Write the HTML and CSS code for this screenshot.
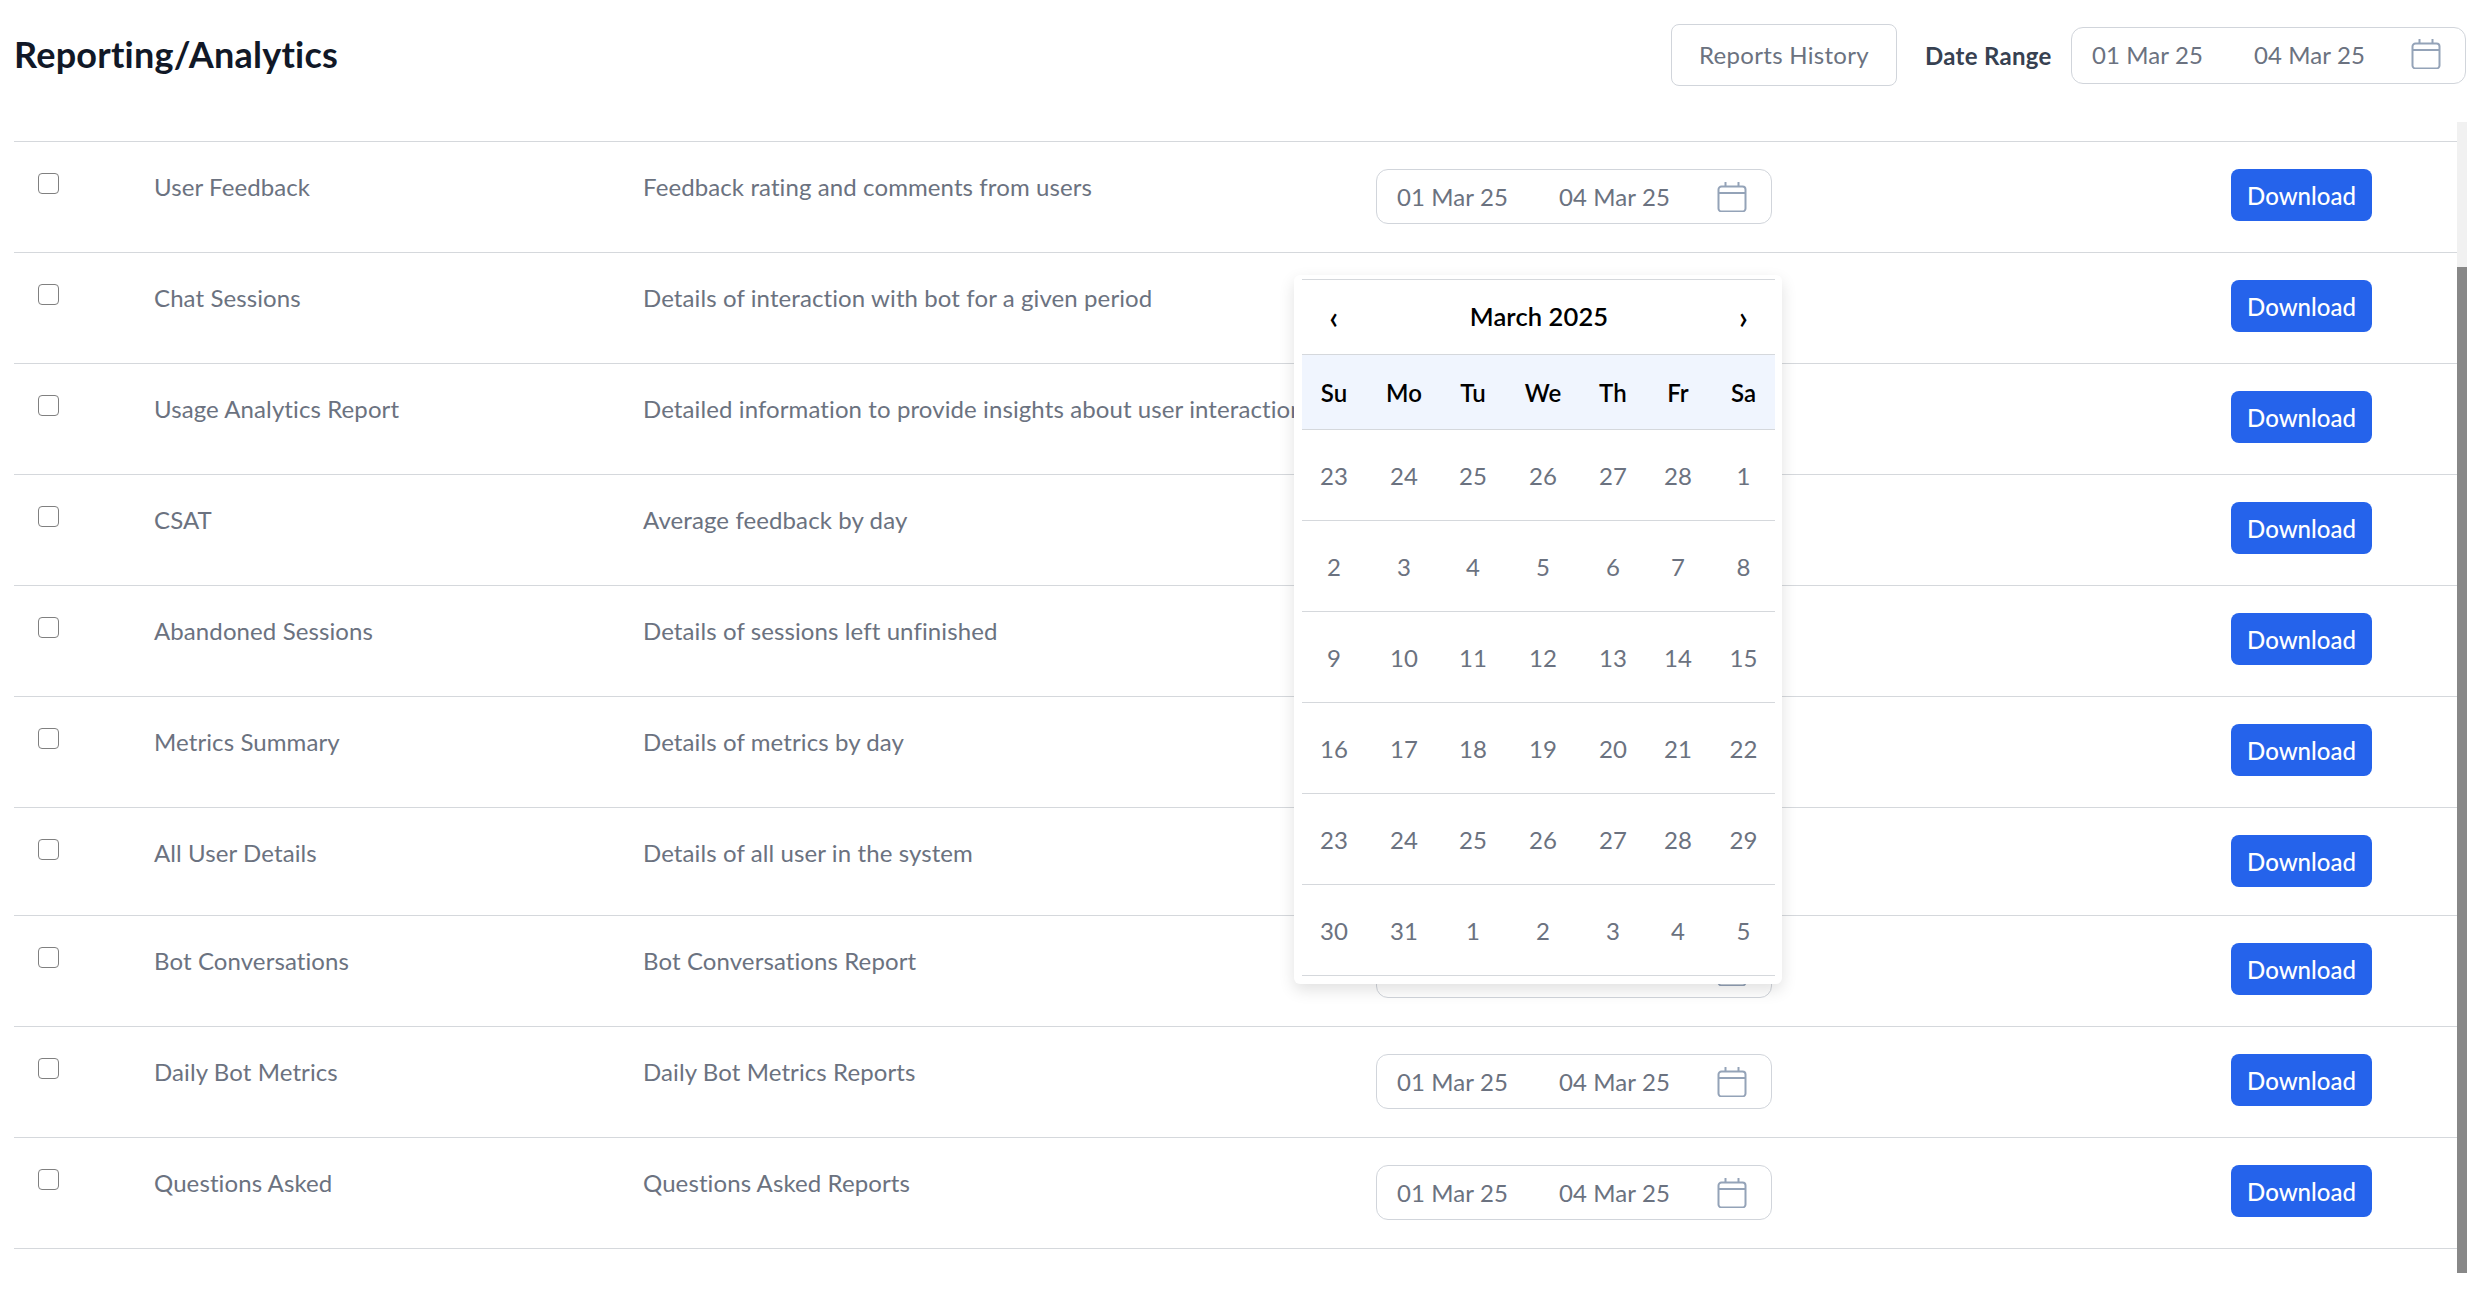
FILE: index.html
```html
<!DOCTYPE html>
<html lang="en">
<head>
<meta charset="utf-8">
<title>Reporting/Analytics</title>
<link rel="stylesheet" href="styles.css">
</head>
<body>
<svg class="defs" width="0" height="0" aria-hidden="true">
  <symbol id="cal" viewBox="0 0 30 30">
    <path d="M4.5 4.500h21a3 3 0 0 1 3 3v19a3 3 0 0 1-3 3h-21a3 3 0 0 1-3-3v-19a3 3 0 0 1 3-3zM1.500 11h27M8.500 .5v4M21.500 .5v4" fill="none" stroke="currentColor" stroke-width="2" stroke-linecap="round"/>
  </symbol>
</svg>
<header class="top">
  <h1 class="title">Reporting/Analytics</h1>
  <div class="top-actions">
    <button class="history">Reports History</button>
    <span class="range-label">Date Range</span>
    <div class="date-box date-box-top"><span class="date">01 Mar 25</span><span class="date">04 Mar 25</span><svg class="cal-icon"><use href="#cal"/></svg></div>
  </div>
</header>
<div class="body-wrap">
  <main class="reports">
    <div class="row"><input class="check" type="checkbox"><span class="name">User Feedback</span><span class="desc">Feedback rating and comments from users</span><div class="date-box"><span class="date">01 Mar 25</span><span class="date">04 Mar 25</span><svg class="cal-icon"><use href="#cal"/></svg></div><button class="download">Download</button></div>
    <div class="row row-covered"><input class="check" type="checkbox"><span class="name">Chat Sessions</span><span class="desc">Details of interaction with bot for a given period</span><div class="date-box"><span class="date">01 Mar 25</span><span class="date">04 Mar 25</span><svg class="cal-icon"><use href="#cal"/></svg></div><button class="download">Download</button></div>
    <div class="row row-covered"><input class="check" type="checkbox"><span class="name">Usage Analytics Report</span><span class="desc">Detailed information to provide insights about user interactions</span><div class="date-box"><span class="date">01 Mar 25</span><span class="date">04 Mar 25</span><svg class="cal-icon"><use href="#cal"/></svg></div><button class="download">Download</button></div>
    <div class="row row-covered"><input class="check" type="checkbox"><span class="name">CSAT</span><span class="desc">Average feedback by day</span><div class="date-box"><span class="date">01 Mar 25</span><span class="date">04 Mar 25</span><svg class="cal-icon"><use href="#cal"/></svg></div><button class="download">Download</button></div>
    <div class="row row-covered"><input class="check" type="checkbox"><span class="name">Abandoned Sessions</span><span class="desc">Details of sessions left unfinished</span><div class="date-box"><span class="date">01 Mar 25</span><span class="date">04 Mar 25</span><svg class="cal-icon"><use href="#cal"/></svg></div><button class="download">Download</button></div>
    <div class="row row-covered"><input class="check" type="checkbox"><span class="name">Metrics Summary</span><span class="desc">Details of metrics by day</span><div class="date-box"><span class="date">01 Mar 25</span><span class="date">04 Mar 25</span><svg class="cal-icon"><use href="#cal"/></svg></div><button class="download">Download</button></div>
    <div class="row row-short row-covered"><input class="check" type="checkbox"><span class="name">All User Details</span><span class="desc">Details of all user in the system</span><div class="date-box"><span class="date">01 Mar 25</span><span class="date">04 Mar 25</span><svg class="cal-icon"><use href="#cal"/></svg></div><button class="download">Download</button></div>
    <div class="row row-covered"><input class="check" type="checkbox"><span class="name">Bot Conversations</span><span class="desc">Bot Conversations Report</span><div class="date-box"><span class="date">01 Mar 25</span><span class="date">04 Mar 25</span><svg class="cal-icon"><use href="#cal"/></svg></div><button class="download">Download</button></div>
    <div class="row"><input class="check" type="checkbox"><span class="name">Daily Bot Metrics</span><span class="desc">Daily Bot Metrics Reports</span><div class="date-box"><span class="date">01 Mar 25</span><span class="date">04 Mar 25</span><svg class="cal-icon"><use href="#cal"/></svg></div><button class="download">Download</button></div>
    <div class="row row-last"><input class="check" type="checkbox"><span class="name">Questions Asked</span><span class="desc">Questions Asked Reports</span><div class="date-box"><span class="date">01 Mar 25</span><span class="date">04 Mar 25</span><svg class="cal-icon"><use href="#cal"/></svg></div><button class="download">Download</button></div>
  </main>
  <div class="scrollbar"><div class="thumb"></div></div>
</div>
<section class="calendar">
  <div class="cal-head"><span class="cal-nav">‹</span><span class="cal-month">March 2025</span><span class="cal-nav">›</span></div>
  <div class="cal-week cal-days">
    <span>Su</span><span>Mo</span><span>Tu</span><span>We</span><span>Th</span><span>Fr</span><span>Sa</span>
  </div>
  <div class="cal-week"><span>23</span><span>24</span><span>25</span><span>26</span><span>27</span><span>28</span><span>1</span></div>
  <div class="cal-week"><span>2</span><span>3</span><span>4</span><span>5</span><span>6</span><span>7</span><span>8</span></div>
  <div class="cal-week"><span>9</span><span>10</span><span>11</span><span>12</span><span>13</span><span>14</span><span>15</span></div>
  <div class="cal-week"><span>16</span><span>17</span><span>18</span><span>19</span><span>20</span><span>21</span><span>22</span></div>
  <div class="cal-week"><span>23</span><span>24</span><span>25</span><span>26</span><span>27</span><span>28</span><span>29</span></div>
  <div class="cal-week"><span>30</span><span>31</span><span>1</span><span>2</span><span>3</span><span>4</span><span>5</span></div>
</section>
</body>
</html>
```
FILE: styles.css
```css
* { box-sizing: border-box; }
html, body { margin: 0; padding: 0; background: #fff; }
body {
  font-family: "Lato", "Liberation Sans", sans-serif;
  font-size: 24px;
  letter-spacing: .1px;
  color: #6b7280;
  height: 1302px;
  overflow: hidden;
  position: relative;
}
.defs { position: absolute; }
.top {
  height: 122px;
  padding: 24px 22px 0 14px;
  display: flex;
  justify-content: space-between;
  align-items: flex-start;
}
.title {
  margin: 7px 0 0;
  font-size: 36px;
  line-height: 46px;
  font-weight: 700;
  letter-spacing: .25px;
  color: #111827;
}
.top-actions { display: flex; align-items: center; height: 62px; }
.history {
  width: 226px;
  height: 62px;
  background: #fff;
  border: 1px solid #d1d5db;
  border-radius: 8px;
  font: inherit;
  letter-spacing: .3px;
  color: #6b7280;
  padding: 0 0 2px;
}
.range-label {
  margin-left: 28px;
  width: 146px;
  font-weight: 700;
  letter-spacing: .3px;
  color: #374151;
  white-space: nowrap;
}
.date-box {
  width: 396px;
  height: 55px;
  border: 1px solid #d1d5db;
  border-radius: 12px;
  padding: 0 24px 0 20px;
  display: flex;
  align-items: center;
  background: #fff;
}
.date-box-top { height: 57px; width: 395px; padding-bottom: 2px; }
.date { width: 162px; white-space: nowrap; flex: none; }
.date + .date { width: 130px; }
.row-covered .date { visibility: hidden; }
.cal-icon { width: 30px; height: 30px; margin-left: auto; color: #94a3b8; flex: none; }
.body-wrap { display: flex; padding-left: 14px; align-items: flex-start; }
.reports { width: 2443px; padding-top: 19px; }
.row {
  height: 111px;
  border-top: 1px solid #d5d8dc;
  display: grid;
  grid-template-columns: 140px 489px 733px 855px 226px;
  align-items: start;
}
.row-short { height: 108px; }
.row-last { height: 112px; border-bottom: 1px solid #d5d8dc; }
.check {
  appearance: none;
  width: 21px;
  height: 21px;
  margin: 31px 0 0 24px;
  background: #fff;
  border: 1.5px solid #808080;
  border-radius: 4px;
}
.name, .desc { margin-top: 30px; line-height: 30px; white-space: nowrap; }
.row .date-box { margin-top: 27px; }
.download {
  margin-top: 27px;
  width: 141px;
  height: 52px;
  background: #2563eb;
  color: #fff;
  border: 0;
  border-radius: 8px;
  font: inherit;
  font-weight: 500;
  padding: 0;
}
.scrollbar { width: 10px; height: 1151px; background: #f1f1f1; padding-top: 145px; }
.thumb { height: 1006px; background: #888; }
.calendar {
  position: absolute;
  left: 1294px;
  top: 275px;
  width: 488px;
  height: 709px;
  padding: 4px 7px 0 8px;
  background: #fff;
  border-radius: 6px;
  box-shadow: 0 6px 16px rgba(0, 0, 0, .12);
  z-index: 2;
}
.cal-head {
  height: 75px;
  border-top: 1px solid #d5d8dc;
  display: grid;
  grid-template-columns: 64px 1fr 63px;
  align-items: center;
  text-align: center;
  color: #000;
  padding-bottom: 2px;
}
.cal-month { font-weight: 600; font-size: 25.500px; }
.cal-nav { font-weight: 600; font-size: 32px; line-height: 32px; padding-top: 2px; }
.cal-week {
  height: 91px;
  border-top: 1px solid #d5d8dc;
  display: grid;
  grid-template-columns: 64px 76px 62px 78px 62px 68px 63px;
  align-items: center;
  text-align: center;
}
.cal-week:last-child { border-bottom: 1px solid #d5d8dc; height: 92px; }
.cal-days { height: 75px; background: #f0f5fe; color: #000; font-weight: 600; }
```
